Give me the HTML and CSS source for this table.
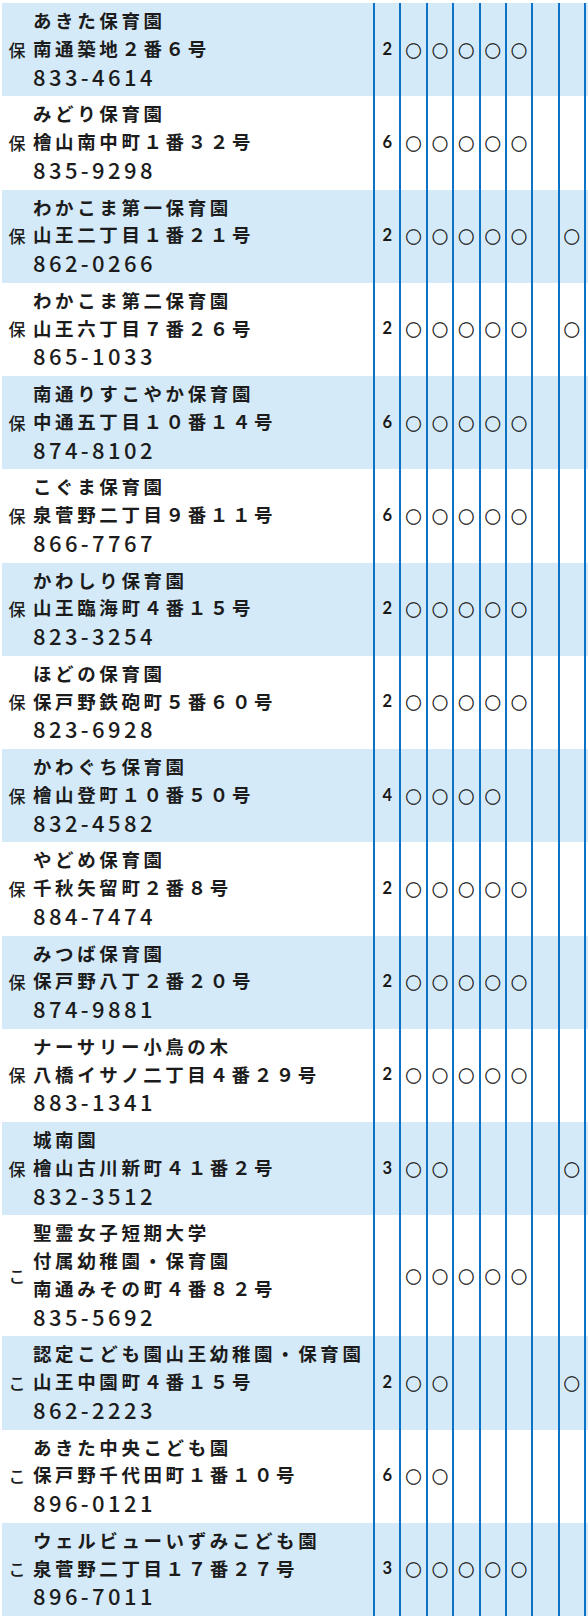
FILE: index.html
```html
<!DOCTYPE html>
<html lang="ja">
<head>
<meta charset="utf-8">
<title>保育施設一覧</title>
<link rel="stylesheet" href="styles.css">
</head>
<body>
<div class="table">
  <div class="row alt">
    <div class="type">保</div>
    <div class="info"><div class="line">あきた保育園</div><div class="line">南通築地２番６号</div><div class="line tel">833-4614</div></div>
    <div class="cell num">2</div>
    <div class="cell"><span class="mark">○</span></div><div class="cell"><span class="mark">○</span></div><div class="cell"><span class="mark">○</span></div><div class="cell"><span class="mark">○</span></div><div class="cell"><span class="mark">○</span></div><div class="cell"></div><div class="cell last"></div>
  </div>
  <div class="row">
    <div class="type">保</div>
    <div class="info"><div class="line">みどり保育園</div><div class="line">檜山南中町１番３２号</div><div class="line tel">835-9298</div></div>
    <div class="cell num">6</div>
    <div class="cell"><span class="mark">○</span></div><div class="cell"><span class="mark">○</span></div><div class="cell"><span class="mark">○</span></div><div class="cell"><span class="mark">○</span></div><div class="cell"><span class="mark">○</span></div><div class="cell"></div><div class="cell last"></div>
  </div>
  <div class="row alt">
    <div class="type">保</div>
    <div class="info"><div class="line">わかこま第一保育園</div><div class="line">山王二丁目１番２１号</div><div class="line tel">862-0266</div></div>
    <div class="cell num">2</div>
    <div class="cell"><span class="mark">○</span></div><div class="cell"><span class="mark">○</span></div><div class="cell"><span class="mark">○</span></div><div class="cell"><span class="mark">○</span></div><div class="cell"><span class="mark">○</span></div><div class="cell"></div><div class="cell last"><span class="mark">○</span></div>
  </div>
  <div class="row">
    <div class="type">保</div>
    <div class="info"><div class="line">わかこま第二保育園</div><div class="line">山王六丁目７番２６号</div><div class="line tel">865-1033</div></div>
    <div class="cell num">2</div>
    <div class="cell"><span class="mark">○</span></div><div class="cell"><span class="mark">○</span></div><div class="cell"><span class="mark">○</span></div><div class="cell"><span class="mark">○</span></div><div class="cell"><span class="mark">○</span></div><div class="cell"></div><div class="cell last"><span class="mark">○</span></div>
  </div>
  <div class="row alt">
    <div class="type">保</div>
    <div class="info"><div class="line">南通りすこやか保育園</div><div class="line">中通五丁目１０番１４号</div><div class="line tel">874-8102</div></div>
    <div class="cell num">6</div>
    <div class="cell"><span class="mark">○</span></div><div class="cell"><span class="mark">○</span></div><div class="cell"><span class="mark">○</span></div><div class="cell"><span class="mark">○</span></div><div class="cell"><span class="mark">○</span></div><div class="cell"></div><div class="cell last"></div>
  </div>
  <div class="row">
    <div class="type">保</div>
    <div class="info"><div class="line">こぐま保育園</div><div class="line">泉菅野二丁目９番１１号</div><div class="line tel">866-7767</div></div>
    <div class="cell num">6</div>
    <div class="cell"><span class="mark">○</span></div><div class="cell"><span class="mark">○</span></div><div class="cell"><span class="mark">○</span></div><div class="cell"><span class="mark">○</span></div><div class="cell"><span class="mark">○</span></div><div class="cell"></div><div class="cell last"></div>
  </div>
  <div class="row alt">
    <div class="type">保</div>
    <div class="info"><div class="line">かわしり保育園</div><div class="line">山王臨海町４番１５号</div><div class="line tel">823-3254</div></div>
    <div class="cell num">2</div>
    <div class="cell"><span class="mark">○</span></div><div class="cell"><span class="mark">○</span></div><div class="cell"><span class="mark">○</span></div><div class="cell"><span class="mark">○</span></div><div class="cell"><span class="mark">○</span></div><div class="cell"></div><div class="cell last"></div>
  </div>
  <div class="row">
    <div class="type">保</div>
    <div class="info"><div class="line">ほどの保育園</div><div class="line">保戸野鉄砲町５番６０号</div><div class="line tel">823-6928</div></div>
    <div class="cell num">2</div>
    <div class="cell"><span class="mark">○</span></div><div class="cell"><span class="mark">○</span></div><div class="cell"><span class="mark">○</span></div><div class="cell"><span class="mark">○</span></div><div class="cell"><span class="mark">○</span></div><div class="cell"></div><div class="cell last"></div>
  </div>
  <div class="row alt">
    <div class="type">保</div>
    <div class="info"><div class="line">かわぐち保育園</div><div class="line">檜山登町１０番５０号</div><div class="line tel">832-4582</div></div>
    <div class="cell num">4</div>
    <div class="cell"><span class="mark">○</span></div><div class="cell"><span class="mark">○</span></div><div class="cell"><span class="mark">○</span></div><div class="cell"><span class="mark">○</span></div><div class="cell"></div><div class="cell"></div><div class="cell last"></div>
  </div>
  <div class="row">
    <div class="type">保</div>
    <div class="info"><div class="line">やどめ保育園</div><div class="line">千秋矢留町２番８号</div><div class="line tel">884-7474</div></div>
    <div class="cell num">2</div>
    <div class="cell"><span class="mark">○</span></div><div class="cell"><span class="mark">○</span></div><div class="cell"><span class="mark">○</span></div><div class="cell"><span class="mark">○</span></div><div class="cell"><span class="mark">○</span></div><div class="cell"></div><div class="cell last"></div>
  </div>
  <div class="row alt">
    <div class="type">保</div>
    <div class="info"><div class="line">みつば保育園</div><div class="line">保戸野八丁２番２０号</div><div class="line tel">874-9881</div></div>
    <div class="cell num">2</div>
    <div class="cell"><span class="mark">○</span></div><div class="cell"><span class="mark">○</span></div><div class="cell"><span class="mark">○</span></div><div class="cell"><span class="mark">○</span></div><div class="cell"><span class="mark">○</span></div><div class="cell"></div><div class="cell last"></div>
  </div>
  <div class="row">
    <div class="type">保</div>
    <div class="info"><div class="line">ナーサリー小鳥の木</div><div class="line">八橋イサノ二丁目４番２９号</div><div class="line tel">883-1341</div></div>
    <div class="cell num">2</div>
    <div class="cell"><span class="mark">○</span></div><div class="cell"><span class="mark">○</span></div><div class="cell"><span class="mark">○</span></div><div class="cell"><span class="mark">○</span></div><div class="cell"><span class="mark">○</span></div><div class="cell"></div><div class="cell last"></div>
  </div>
  <div class="row alt">
    <div class="type">保</div>
    <div class="info"><div class="line">城南園</div><div class="line">檜山古川新町４１番２号</div><div class="line tel">832-3512</div></div>
    <div class="cell num">3</div>
    <div class="cell"><span class="mark">○</span></div><div class="cell"><span class="mark">○</span></div><div class="cell"></div><div class="cell"></div><div class="cell"></div><div class="cell"></div><div class="cell last"><span class="mark">○</span></div>
  </div>
  <div class="row">
    <div class="type">こ</div>
    <div class="info"><div class="line">聖霊女子短期大学</div><div class="line">付属幼稚園・保育園</div><div class="line">南通みその町４番８２号</div><div class="line tel">835-5692</div></div>
    <div class="cell num"></div>
    <div class="cell"><span class="mark">○</span></div><div class="cell"><span class="mark">○</span></div><div class="cell"><span class="mark">○</span></div><div class="cell"><span class="mark">○</span></div><div class="cell"><span class="mark">○</span></div><div class="cell"></div><div class="cell last"></div>
  </div>
  <div class="row alt">
    <div class="type">こ</div>
    <div class="info"><div class="line">認定こども園山王幼稚園・保育園</div><div class="line">山王中園町４番１５号</div><div class="line tel">862-2223</div></div>
    <div class="cell num">2</div>
    <div class="cell"><span class="mark">○</span></div><div class="cell"><span class="mark">○</span></div><div class="cell"></div><div class="cell"></div><div class="cell"></div><div class="cell"></div><div class="cell last"><span class="mark">○</span></div>
  </div>
  <div class="row">
    <div class="type">こ</div>
    <div class="info"><div class="line">あきた中央こども園</div><div class="line">保戸野千代田町１番１０号</div><div class="line tel">896-0121</div></div>
    <div class="cell num">6</div>
    <div class="cell"><span class="mark">○</span></div><div class="cell"><span class="mark">○</span></div><div class="cell"></div><div class="cell"></div><div class="cell"></div><div class="cell"></div><div class="cell last"></div>
  </div>
  <div class="row alt">
    <div class="type">こ</div>
    <div class="info"><div class="line">ウェルビューいずみこども園</div><div class="line">泉菅野二丁目１７番２７号</div><div class="line tel">896-7011</div></div>
    <div class="cell num">3</div>
    <div class="cell"><span class="mark">○</span></div><div class="cell"><span class="mark">○</span></div><div class="cell"><span class="mark">○</span></div><div class="cell"><span class="mark">○</span></div><div class="cell"><span class="mark">○</span></div><div class="cell"></div><div class="cell last"></div>
  </div>
</div>
</body>
</html>
```
FILE: styles.css
```css
* { box-sizing: border-box; }
html, body { margin: 0; padding: 0; background: #ffffff; }
body {
  font-family: "Noto Sans CJK JP", "Noto Sans", sans-serif;
  color: #1c1c1c;
}
.table {
  padding: 3px 0 0 2px;
  width: 588px;
}
.row {
  display: grid;
  grid-template-columns: 30px 341px repeat(7, 26.375px) 28.375px;
  background: #ffffff;
}
.row.alt { background: #d5eaf8; }
.type {
  display: flex;
  align-items: center;
  justify-content: center;
  font-size: 17px;
  font-weight: 500;
  padding-bottom: 1px;
}
.info {
  padding: 4px 0 6px 1px;
}
.line {
  height: 27.75px;
  line-height: 27.75px;
  font-size: 18.5px;
  font-weight: 700;
  letter-spacing: 3.6px;
  white-space: nowrap;
}
.line.tel {
  font-size: 22px;
  font-weight: 500;
  letter-spacing: 3.4px;
  line-height: 26.5px;
}
.cell {
  border-left: 2px solid #0b72c6;
  display: flex;
  align-items: center;
  justify-content: center;
}
.cell.last { border-right: 2px solid #0b72c6; }
.num {
  font-family: "Lato", "Open Sans", sans-serif;
  font-weight: 700;
  font-size: 16.5px;
  color: #1a1a1a;
  padding-bottom: 2px;
}
.mark {
  font-family: "Noto Sans CJK JP", sans-serif;
  font-size: 16px;
  font-weight: 400;
  line-height: 1;
  color: #1a1a1a;
  -webkit-text-stroke: 0.45px #1a1a1a;
}
```
